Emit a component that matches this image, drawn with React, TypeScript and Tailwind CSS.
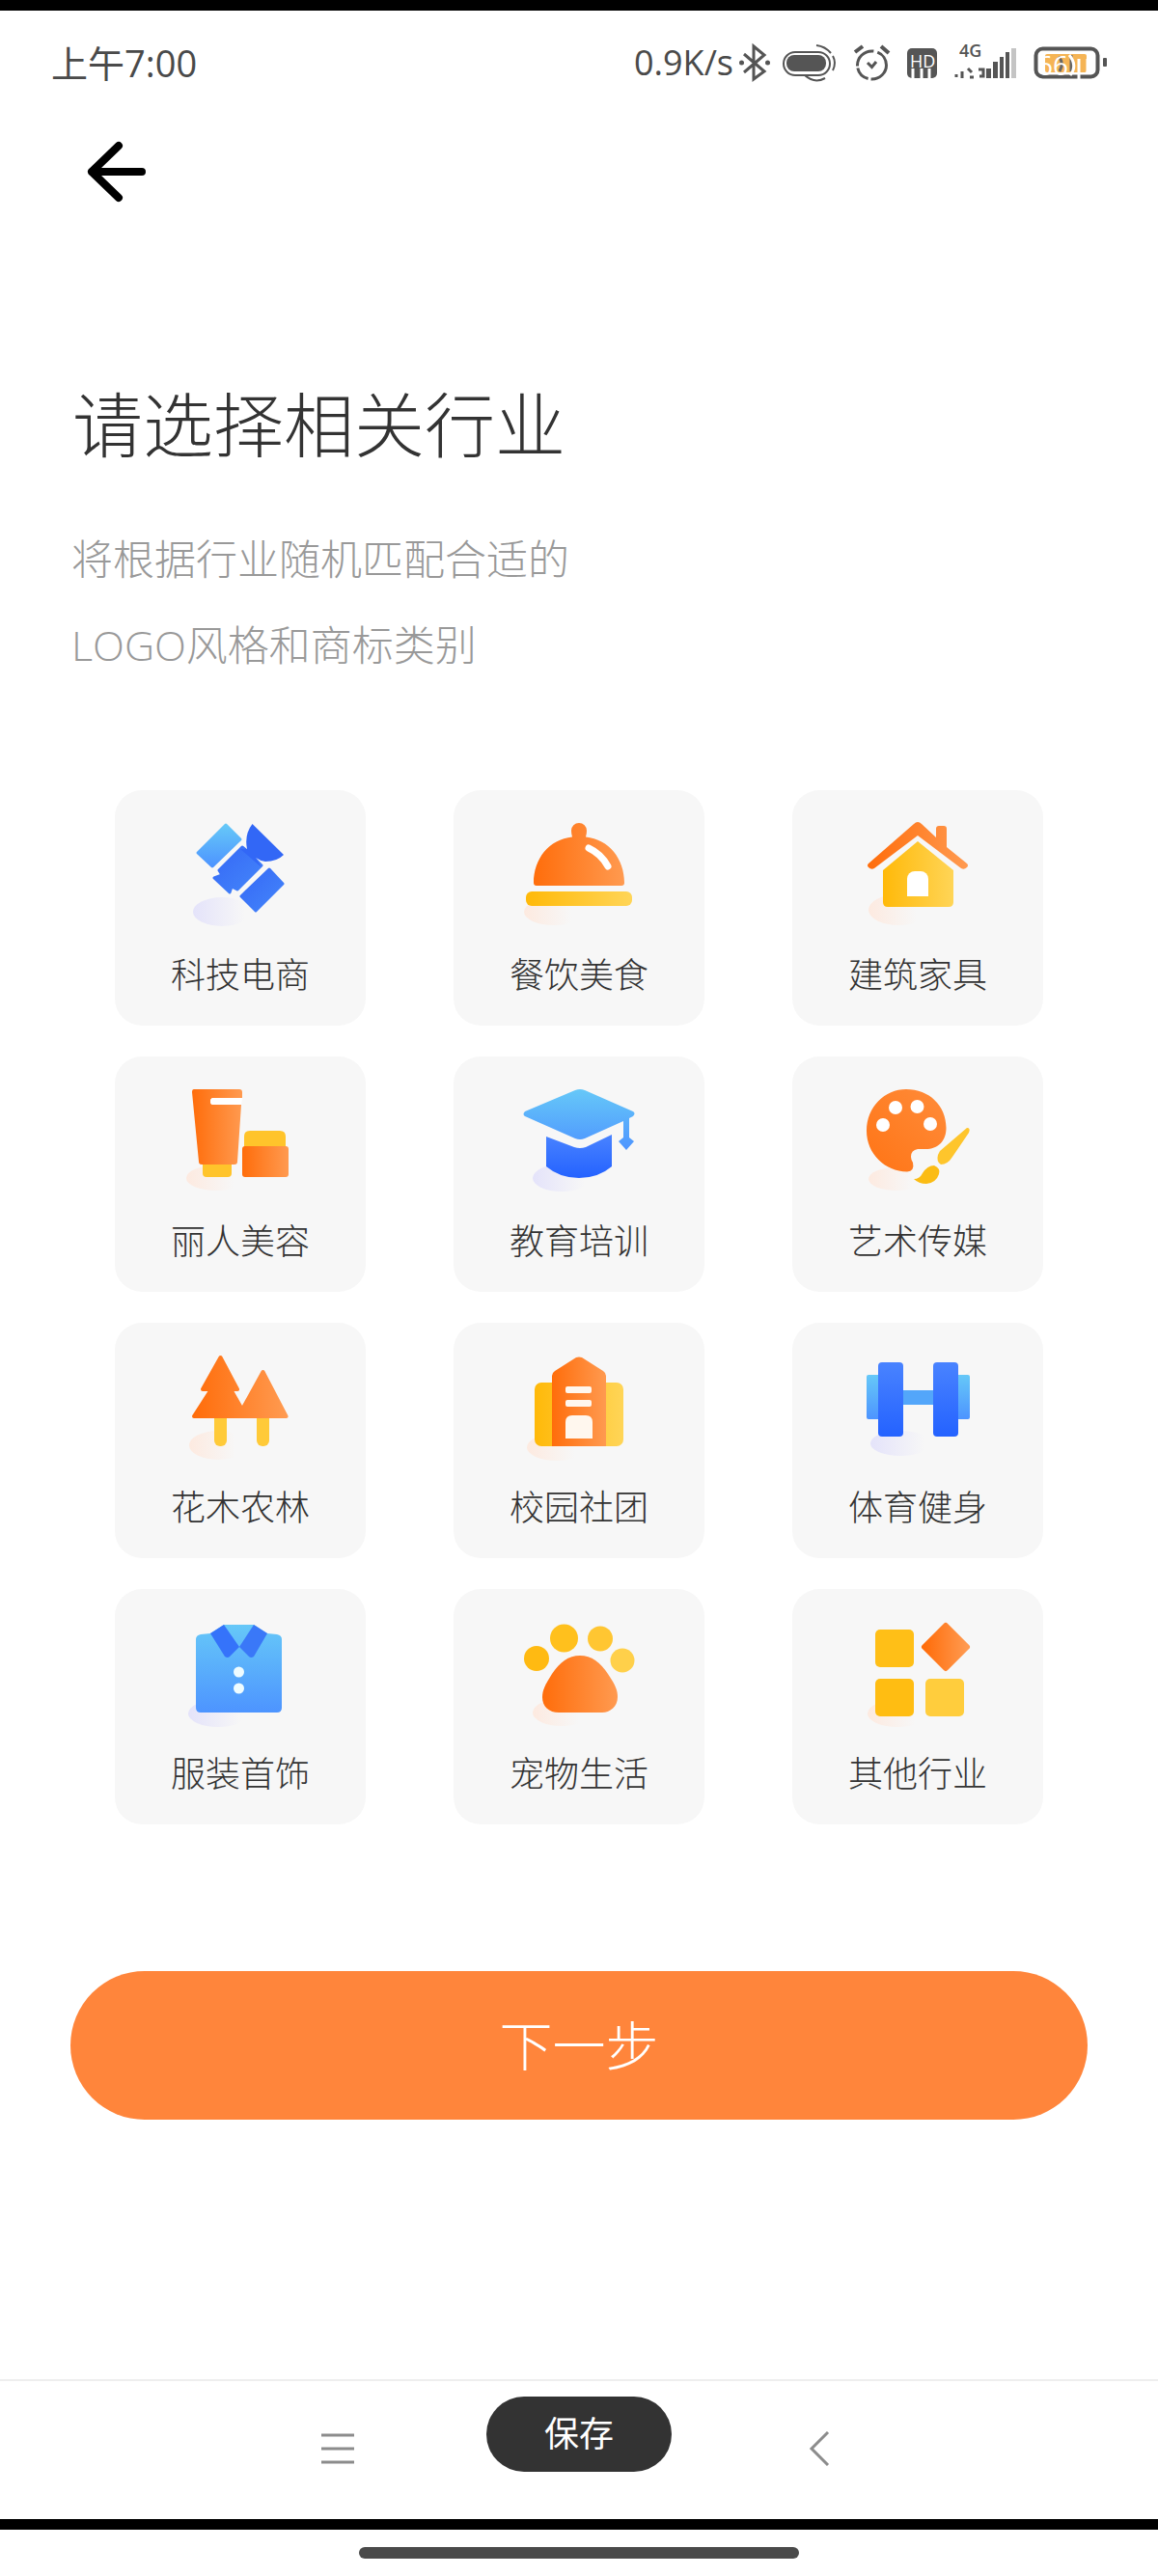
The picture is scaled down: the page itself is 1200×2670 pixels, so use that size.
/**
 * IndustryPicker — onboarding step where the user picks the industry that
 * drives the logo style and trademark class. Tiles are single-select.
 */
import { useState, type ReactNode } from 'react'

interface Industry {
  id: string
  label: string
  icon: ReactNode
}

/* Shared paint for the tile icons, referenced by id from every icon. */
function IconGradients() {
  return (
    <svg className="absolute h-0 w-0" aria-hidden="true">
      <defs>
        <linearGradient id="orange" x1="0" y1="0" x2="1" y2="0">
          <stop offset="0" stopColor="#ff6d0b" />
          <stop offset="1" stopColor="#ff9a50" />
        </linearGradient>
        <linearGradient id="orangeDown" x1="0" y1="1" x2="1" y2="0">
          <stop offset="0" stopColor="#ff7415" />
          <stop offset="1" stopColor="#ff8c3a" />
        </linearGradient>
        <linearGradient id="yellow" x1="0" y1="0" x2="1" y2="0">
          <stop offset="0" stopColor="#ffb909" />
          <stop offset="1" stopColor="#ffd557" />
        </linearGradient>
        <linearGradient id="sky" x1="0" y1="0" x2="0" y2="1">
          <stop offset="0" stopColor="#66c8f8" />
          <stop offset="1" stopColor="#4d94ff" />
        </linearGradient>
        <linearGradient id="blue" x1="0" y1="0" x2="1" y2="1">
          <stop offset="0" stopColor="#3568f6" />
          <stop offset="1" stopColor="#4486fa" />
        </linearGradient>
        <linearGradient id="blueUp" x1="0" y1="0" x2="0" y2="1">
          <stop offset="0" stopColor="#4983ff" />
          <stop offset="1" stopColor="#2462ff" />
        </linearGradient>
        <linearGradient id="shadeWarm" x1="0" y1="0" x2="1" y2="0">
          <stop offset="0" stopColor="#fdeae0" />
          <stop offset="0.8" stopColor="#f7f7f7" />
        </linearGradient>
        <linearGradient id="shadeCool" x1="0" y1="0" x2="1" y2="0">
          <stop offset="0" stopColor="#e4e3fa" />
          <stop offset="0.9" stopColor="#f7f7f7" />
        </linearGradient>
      </defs>
    </svg>
  )
}

const industries: Industry[] = [
  {
    id: 'tech',
    label: '科技电商',
    icon: (
      <>
        <ellipse cx="51" cy="96" rx="30" ry="15" fill="url(#shadeCool)" />
        <g strokeWidth="3" strokeLinejoin="round">
          <path d="M55 6 70 21 41 49 26 35Z" fill="url(#sky)" stroke="url(#sky)" />
          <path d="M100 52 114 67 86 95 71 80Z" fill="url(#blue)" stroke="url(#blue)" />
          <path d="M72 29 77 33 88 44 92 48 67 73 61 70 59 76 43 61 51 58 48 53Z" fill="url(#blue)" stroke="url(#blue)" />
        </g>
        <path d="M82.5 5 115 37Q108 44 96 44 90 43 86 40L92 50 70 31 77 31Q74 16 82.5 5Z" fill="#3267f6" />
      </>
    ),
  },
  {
    id: 'food',
    label: '餐饮美食',
    icon: (
      <>
        <ellipse cx="44" cy="96" rx="31" ry="14" fill="url(#shadeWarm)" />
        <path
          d="M62 12a8 8 0 0 1 16 0q0 3-1 6.500C101 21 117 41 117 66q0 3-3 3H26q-3 0-3-3C23 41 39 21 63 18.500Q62 15 62 12Z"
          fill="url(#orange)"
        />
        <path d="M80 30Q93 36 100 49" fill="none" stroke="#fff" strokeWidth="7" strokeLinecap="round" />
        <rect x="15" y="75" width="110" height="15" rx="6" fill="url(#yellow)" />
      </>
    ),
  },
  {
    id: 'building',
    label: '建筑家具',
    icon: (
      <>
        <ellipse cx="50" cy="94" rx="31" ry="16" fill="url(#shadeWarm)" />
        <path
          d="M66 5q4-4 8 0L89 19V10q0-3 3-3h5q3 0 3 3v19l21 17q2 2 0 4-3 3-6 1L70 17 25 51q-3 2-6-1-2-2 0-4Z"
          fill="url(#orange)"
        />
        <path
          d="M70 23 107 53V86q0 5-5 5H39q-5 0-5-5V53Z"
          fill="url(#yellow)"
        />
        <path d="M59 80H81V62a8 8 0 0 0-8-8h-6a8 8 0 0 0-8 8Z" fill="#fff" />
      </>
    ),
  },
  {
    id: 'beauty',
    label: '丽人美容',
    icon: (
      <>
        <ellipse cx="45" cy="96" rx="31" ry="13" fill="url(#shadeWarm)" />
        <path d="M31 80h30v11q0 4-4 4H35q-4 0-4-4Z" fill="#ffc42b" />
        <path
          d="M22 4H69q3 0 3 3V13H42q-3 0-3 3.500T42 20H71L67 79q0 3-3 3H30q-3 0-3-3L20 7q0-3 2-3Z"
          fill="url(#orange)"
        />
        <path d="M39 16.500Q39 13 42 13H72L71 20H42Q39 20 39 16.500Z" fill="#fff" />
        <path d="M74 64V53q0-6 6-6h31q6 0 6 6v11Z" fill="#ffc42b" />
        <path d="M72 66q0-3 3-3h42q3 0 3 3v26q0 3-3 3H75q-3 0-3-3Z" fill="url(#orange)" />
      </>
    ),
  },
  {
    id: 'education',
    label: '教育培训',
    icon: (
      <>
        <ellipse cx="52" cy="96" rx="30" ry="14" fill="url(#shadeCool)" />
        <path d="M36 53 65 64q6 2 12 0L104 51V84Q90 96 70 96T36 84Z" fill="url(#blueUp)" />
        <path
          d="M66 5q5-2 10 0L126 27q3 2 0 5l-4 2V54l5 4-8 9-8-9 5-4V37L76 55q-5 2-10 0L14 32q-3-2 0-5Z"
          fill="url(#sky)"
        />
      </>
    ),
  },
  {
    id: 'art',
    label: '艺术传媒',
    icon: (
      <>
        <ellipse cx="48" cy="97" rx="29" ry="12" fill="url(#shadeWarm)" />
        <path
          d="M58 4C82 4 99.500 21 99.500 44 99.500 58 91 66 78 66H70Q63 67 63 74 63 77 65 80 67 89 59 89.500C36 89 17 71 17 47 17 22 36 4 58 4Z"
          fill="url(#orangeDown)"
        />
        <g fill="#fff">
          <circle cx="47" cy="23" r="7" />
          <circle cx="69.500" cy="22" r="7" />
          <circle cx="34" cy="41" r="7" />
          <circle cx="83" cy="40" r="7" />
        </g>
        <path d="M121 44q4 0 2 5L106 74q-5 8-12 8-5-3-3-10l2-4Z" fill="#fec52c" />
        <path d="M66 97q6 0 9-6 5-8 12-8 7 3 5 9-3 9-13 10-8 0-13-5Z" fill="#fbbc14" />
      </>
    ),
  },
  {
    id: 'plants',
    label: '花木农林',
    icon: (
      <>
        <ellipse cx="47" cy="97" rx="30" ry="15" fill="url(#shadeWarm)" />
        <rect x="43" y="60" width="13" height="38" rx="6" fill="#ffca38" />
        <rect x="87" y="60" width="13" height="38" rx="6" fill="#ffca38" />
        <path
          d="M49.500 6 67 39H60L72 60 93.500 21 117.500 67H22L40 39H31Z"
          fill="url(#orange)"
          stroke="url(#orange)"
          strokeWidth="4"
          strokeLinejoin="round"
        />
      </>
    ),
  },
  {
    id: 'campus',
    label: '校园社团',
    icon: (
      <>
        <ellipse cx="47" cy="99" rx="31" ry="14" fill="url(#shadeWarm)" />
        <rect x="24" y="32" width="92" height="66" rx="7" fill="url(#yellow)" />
        <path d="M42 25q0-3 3-5L67 6q3-1 6 0L95 20q3 2 3 5V98H42Z" fill="url(#orange)" />
        <g fill="#fff7ee">
          <rect x="56" y="36" width="27" height="7" rx="2" />
          <rect x="56" y="50" width="27" height="7" rx="2" />
          <path d="M56 90V73q0-7 7-7H77q7 0 7 7V90Z" />
        </g>
      </>
    ),
  },
  {
    id: 'sport',
    label: '体育健身',
    icon: (
      <>
        <ellipse cx="52" cy="95" rx="31" ry="13" fill="url(#shadeCool)" />
        <rect x="17" y="24" width="20" height="46" rx="2" fill="url(#sky)" />
        <rect x="104" y="24" width="20" height="46" rx="2" fill="url(#sky)" />
        <rect x="50" y="40" width="40" height="15" fill="#53a6fa" />
        <rect x="29" y="11" width="26" height="77" rx="4" fill="url(#blueUp)" />
        <rect x="86" y="11" width="26" height="77" rx="4" fill="url(#blueUp)" />
      </>
    ),
  },
  {
    id: 'clothing',
    label: '服装首饰',
    icon: (
      <>
        <ellipse cx="47" cy="99" rx="31" ry="14" fill="url(#shadeCool)" />
        <path
          d="M53 7H84L98 16 108 17q5 1 5 5V93q0 5-5 5H29q-5 0-5-5V22q0-4 5-5l10-1Z"
          fill="url(#sky)"
        />
        <path d="M53 7 39 16 54 40q3 2 5 0L69 30Z" fill="#3573fa" />
        <path d="M84 7 98 16 84 40q-3 2-5 0L69 30Z" fill="#3a78f8" />
        <ellipse cx="68.500" cy="56" rx="5.500" ry="5.500" fill="#eefcff" />
        <ellipse cx="68.500" cy="73" rx="5.500" ry="5.500" fill="#eefcff" />
      </>
    ),
  },
  {
    id: 'pets',
    label: '宠物生活',
    icon: (
      <>
        <ellipse cx="52" cy="98" rx="30" ry="14" fill="url(#shadeWarm)" />
        <circle cx="26" cy="42" r="13" fill="#ffba12" />
        <circle cx="54.500" cy="21" r="14.500" fill="#ffc01d" />
        <circle cx="92" cy="21.500" r="13" fill="#ffc632" />
        <circle cx="115" cy="44" r="12.500" fill="#ffd04a" />
        <path
          d="M71 39C83 39 92 46 100 58 108 70 110 75 110 82 110 92 102 98 94 98H49C39 98 32 92 32 82 32 75 35 69 42 58 50 46 59 39 71 39Z"
          fill="url(#orange)"
        />
      </>
    ),
  },
  {
    id: 'other',
    label: '其他行业',
    icon: (
      <>
        <ellipse cx="49" cy="99" rx="31" ry="14" fill="url(#shadeWarm)" />
        <rect x="26" y="12" width="40" height="39" rx="5" fill="#ffbf17" />
        <rect x="26" y="63" width="40" height="39" rx="5" fill="#ffbd12" />
        <rect x="78" y="63" width="40" height="39" rx="5" fill="#ffcd3d" />
        <path
          d="M99 8 121 30 99 52 77 30Z"
          fill="url(#orange)"
          stroke="url(#orange)"
          strokeWidth="6"
          strokeLinejoin="round"
        />
      </>
    ),
  },
]

function StatusIcons() {
  return (
    <svg viewBox="0 0 386 40" className="h-10 w-[386px] overflow-visible" fill="none" stroke="#555" strokeWidth="3" aria-hidden="true">
      {/* bluetooth */}
      <path d="M7 11 28 29 17 37V3L28 12 7 30" />
      <circle cx="4.500" cy="20" r="2.500" fill="#555" stroke="none" />
      <circle cx="31.500" cy="20" r="2.500" fill="#555" stroke="none" />
      {/* vibration pill */}
      <g strokeWidth="2">
        <rect x="48" y="9" width="48" height="24" rx="12" />
        <rect x="51" y="12" width="41" height="17" rx="8" fill="#555" stroke="none" />
        <path d="M82 2Q91 3 97 10M70 33Q80 42 91 36M99 13Q103 20 99 28" />
      </g>
      {/* alarm */}
      <ellipse cx="139.500" cy="22.500" rx="15" ry="14.500" strokeDasharray="24 3 16 2 26 4" />
      <path d="M122 9 130 3M149 3 157 10" strokeWidth="4" />
      <path d="M135 20 139.500 24.500 144 19" />
      {/* HD */}
      <rect x="176" y="5" width="31" height="31" rx="5" fill="#555" stroke="none" />
      <text x="179" y="25" fontSize="18" fill="#fff" stroke="none">HD</text>
      <path d="M182 26V37M191 26V37M199 26V37" stroke="#fff" />
      {/* signal */}
      <text x="230" y="14" fontSize="18" fontWeight="600" fill="#555" stroke="none">4G</text>
      <path d="M227 32v3M233 29v7M239 26l4 4M241 35h4M250 27h5v7h-4" />
      <g fill="#555" stroke="none">
        <rect x="258" y="26" width="5" height="10" />
        <rect x="265" y="19" width="5" height="17" />
        <rect x="272" y="14" width="4" height="22" />
        <rect x="278" y="9" width="4" height="27" />
        <rect x="284" y="5" width="5" height="31" fill="#c4c4c4" />
      </g>
      {/* battery */}
      <rect x="309.500" y="5.500" width="64" height="29" rx="7" strokeWidth="4" />
      <rect x="379" y="15" width="4" height="9" rx="1" fill="#555" stroke="none" />
      <rect x="319" y="11" width="43" height="19" rx="2" fill="#f5b455" stroke="none" />
      <path d="M333 14Q339 20 334 29M346 12V29" stroke="#666" />
      <text x="311" y="33" fontSize="28" fill="#fff" stroke="none">66</text>
      <path d="M344 12Q353 23 345 33M354 16V39M363 16V30" stroke="#fff" />
    </svg>
  )
}

function StatusBar() {
  return (
    <header className="box-content flex h-[108px] items-center justify-between border-t-[11px] border-black pr-[50px] pl-[53px] text-[#4a4a4a]">
      <time className="text-[38px]">上午7:00</time>
      <div className="flex items-center gap-1">
        <span className="text-4xl">0.9K/s</span>
        <StatusIcons />
      </div>
    </header>
  )
}

export default function App() {
  const [selected, setSelected] = useState<string | null>(null)

  return (
    <div className="flex min-h-screen flex-col bg-white font-['Open_Sans','Noto_Sans_CJK_SC',sans-serif]">
      <IconGradients />
      <StatusBar />

      <main className="flex-1 px-[73px] font-light">
        <button type="button" aria-label="返回" className="flex h-[118px] w-24 items-center pl-4">
          <svg viewBox="0 0 64 66" className="h-[66px] w-16" fill="none" stroke="#000" strokeWidth="8" strokeLinecap="round" strokeLinejoin="round" aria-hidden="true">
            <path d="M34 6 6 33 34 60M6 33H58" />
          </svg>
        </button>

        <h1 className="mt-[159px] pl-0.5 text-[73px] leading-[88px] text-[#333]">请选择相关行业</h1>
        <p className="mt-[51px] pl-px text-[43px] leading-[89px] text-[#999]">
          将根据行业随机匹配合适的
          <br />
          LOGO风格和商标类别
        </p>

        <div className="mt-[106px] grid grid-cols-3 gap-x-[91px] gap-y-8 px-[46px]">
          {industries.map((item) => (
            <button
              key={item.id}
              type="button"
              aria-pressed={selected === item.id}
              onClick={() => setSelected(item.id)}
              className="flex h-[244px] flex-col items-center rounded-[28px] bg-[#f7f7f7] pt-[30px]"
            >
              <svg viewBox="0 0 140 120" className="h-[120px] w-[140px]" aria-hidden="true">
                {item.icon}
              </svg>
              <span className="mt-4 text-4xl leading-[52px] text-[#333]">{item.label}</span>
            </button>
          ))}
        </div>

        <button
          type="button"
          className="mt-[152px] h-[154px] w-full rounded-full bg-[#ff853b] text-[55px] text-white"
        >
          下一步
        </button>
      </main>

      <nav className="relative flex h-[145px] items-center justify-center gap-[466px] border-t-2 border-[#eee] pb-1">
        <button type="button" aria-label="菜单">
          <svg viewBox="0 0 34 36" className="h-9 w-[34px]" stroke="#8c8c8c" strokeWidth="3" aria-hidden="true">
            <path d="M0 4H34M0 18H34M0 32H34" />
          </svg>
        </button>
        <button type="button" aria-label="后退">
          <svg viewBox="0 0 34 36" className="h-9 w-[34px]" fill="none" stroke="#8c8c8c" strokeWidth="3" aria-hidden="true">
            <path d="M25 1 8 18 25 35" />
          </svg>
        </button>
        <button
          type="button"
          className="absolute top-4 left-1/2 h-[78px] w-48 -translate-x-1/2 rounded-full bg-[#333] text-4xl text-white"
        >
          保存
        </button>
      </nav>

      <footer className="flex h-[59px] items-center justify-center border-t-[11px] border-black">
        <div className="h-3 w-[38%] rounded-full bg-[#4a4a4a]" />
      </footer>
    </div>
  )
}
